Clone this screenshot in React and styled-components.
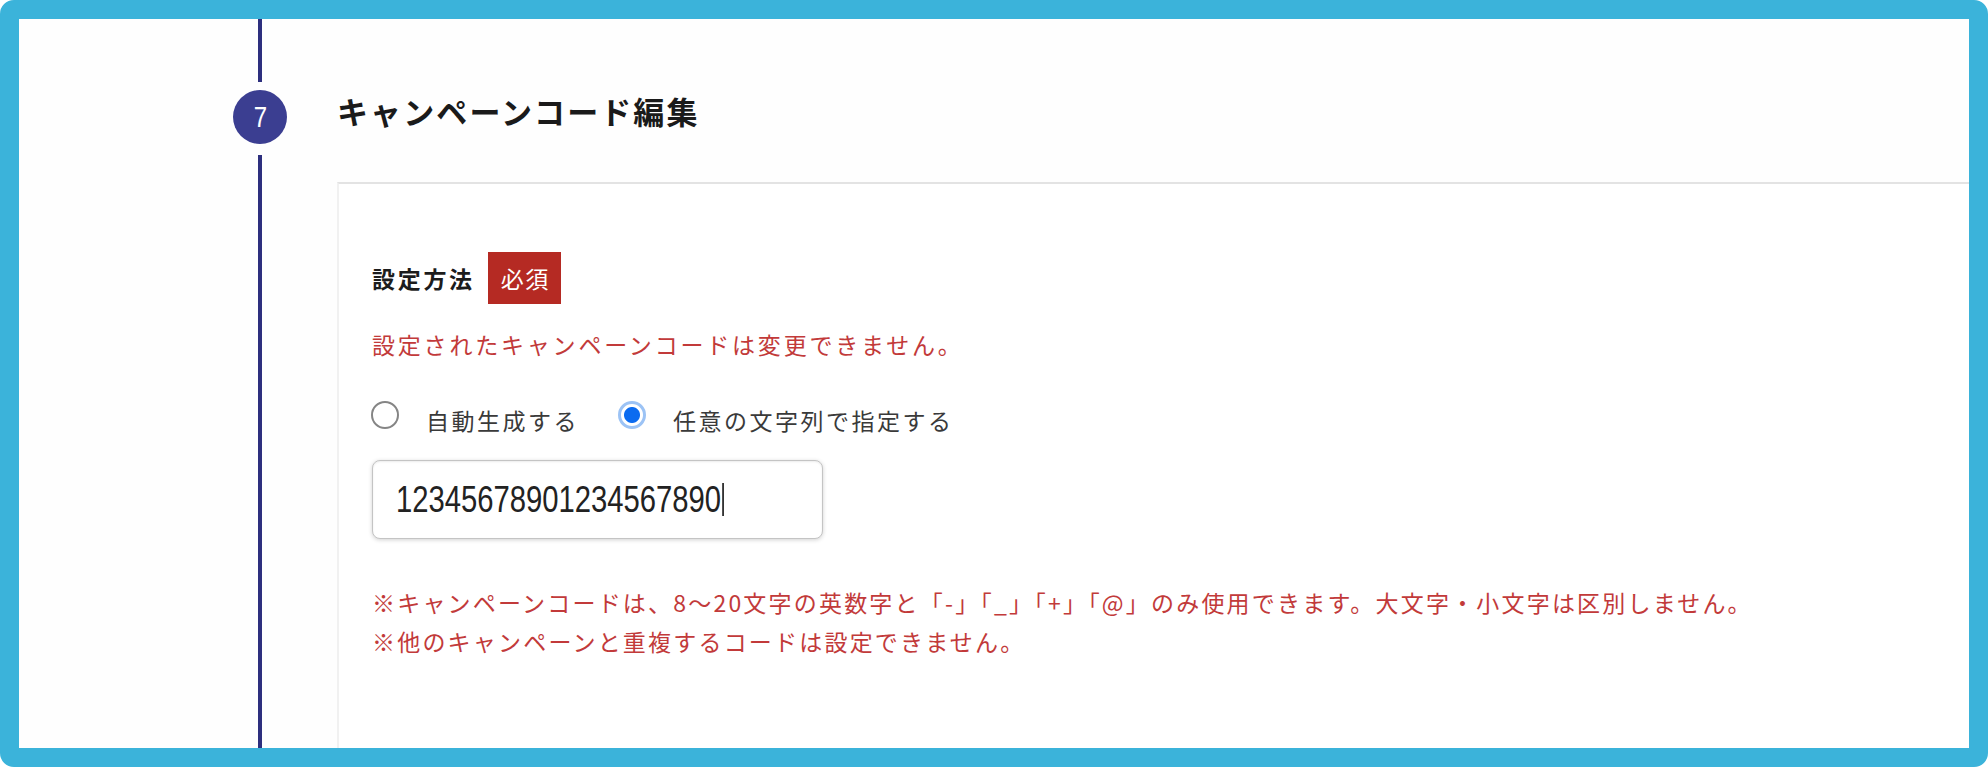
import React, { useState } from "react";
import styled, { createGlobalStyle } from "styled-components";

const GlobalStyle = createGlobalStyle`
  html, body {
    margin: 0;
    padding: 0;
    background: #ffffff;
  }
  body {
    font-family: "Noto Sans CJK JP", "Noto Sans", sans-serif;
  }
`;

const CampaignCodeStep = () => {
  const [mode, setMode] = useState("custom");
  const code = "12345678901234567890";

  return (
    <Frame>
      <GlobalStyle />
      <Rail>
        <RailLine $height="63px" />
        <StepBadge>
          <span>7</span>
        </StepBadge>
        <RailLine $grow />
      </Rail>

      <Content>
        <Title>キャンペーンコード編集</Title>
        <Card>
          <LabelRow>
            <FieldLabel>設定方法</FieldLabel>
            <Required>必須</Required>
          </LabelRow>

          <Warning>設定されたキャンペーンコードは変更できません。</Warning>

          <RadioRow>
            <RadioOption>
              <Radio
                type="radio"
                name="mode"
                checked={mode === "auto"}
                onChange={() => setMode("auto")}
              />
              <RadioText>自動生成する</RadioText>
            </RadioOption>
            <RadioOption>
              <Radio
                type="radio"
                name="mode"
                checked={mode === "custom"}
                onChange={() => setMode("custom")}
              />
              <RadioText>任意の文字列で指定する</RadioText>
            </RadioOption>
          </RadioRow>

          <CodeField>
            <CodeText>
              {code}
              <Caret />
            </CodeText>
          </CodeField>

          <Notes>
            <p>
              ※キャンペーンコードは、8〜20文字の英数字と「-」「_」「+」「@」のみ使用できます。大文字・小文字は区別しません。
            </p>
            <p>※他のキャンペーンと重複するコードは設定できません。</p>
          </Notes>
        </Card>
      </Content>
    </Frame>
  );
};

export default CampaignCodeStep;

//FRAME
const Frame = styled.div`
  box-sizing: border-box;
  height: 100vh;
  border: 19px solid #3bb3da;
  border-radius: 14px;
  background: #fefefe;
  overflow: hidden;
  padding-left: 214px;
  display: grid;
  grid-template-columns: 54px 1fr;
  column-gap: 50px;
`;

//TIMELINE
const Rail = styled.div`
  display: flex;
  flex-direction: column;
  align-items: center;
`;

const RailLine = styled.div`
  width: 4px;
  background: #2d2f7e;
  height: ${(p) => p.$height || "auto"};
  flex: ${(p) => (p.$grow ? 1 : "none")};
  margin-top: ${(p) => (p.$grow ? "11px" : "0")};
`;

const StepBadge = styled.div`
  margin-top: 8px;
  width: 54px;
  height: 54px;
  border-radius: 50%;
  background: #3b3e91;
  color: #ffffff;
  display: flex;
  align-items: center;
  justify-content: center;
  font-family: "Liberation Sans", Arial, sans-serif;
  font-size: 30px;

  span {
    display: inline-block;
    transform: scaleX(0.8);
  }
`;

//CONTENT
const Content = styled.div`
  display: flex;
  flex-direction: column;
  min-width: 0;
`;

const Title = styled.h2`
  margin: 68px 0 0;
  font-size: 31px;
  line-height: 48px;
  letter-spacing: 2.1px;
  font-weight: 700;
  color: #1a1a1a;
`;

const Card = styled.section`
  margin-top: 47px;
  flex: 1;
  border-top: 2px solid #e3e3e3;
  border-left: 2px solid #f1f1f1;
  background: #ffffff;
  padding: 68px 0 0 33px;
`;

const LabelRow = styled.div`
  display: flex;
  align-items: center;
  gap: 13px;
  height: 52px;
`;

const FieldLabel = styled.span`
  font-size: 23px;
  font-weight: 700;
  letter-spacing: 2.7px;
  color: #1c1c1c;
`;

const Required = styled.span`
  width: 73px;
  height: 52px;
  box-sizing: border-box;
  padding-left: 2px;
  background: #b52a23;
  color: #ffffff;
  font-size: 23px;
  letter-spacing: 1.5px;
  display: flex;
  align-items: center;
  justify-content: center;
`;

const Warning = styled.p`
  margin: 22px 0 0;
  font-size: 23px;
  line-height: 36px;
  letter-spacing: 2.8px;
  color: #c23a3a;
`;

const RadioRow = styled.div`
  margin-top: 35px;
  height: 36px;
  display: flex;
  align-items: center;
  gap: 40px;
`;

const RadioOption = styled.label`
  display: flex;
  align-items: center;
  gap: 27px;
  cursor: pointer;
`;

const Radio = styled.input`
  appearance: none;
  -webkit-appearance: none;
  box-sizing: border-box;
  margin: 0 0 0 -1px;
  width: 28px;
  height: 28px;
  border-radius: 50%;
  border: 2px solid #858585;
  background: #ffffff;

  &:checked {
    border: 3px solid #9cc3f5;
    background: radial-gradient(circle, #0b6bf0 0 7.5px, #ffffff 8.5px);
  }
`;

const RadioText = styled.span`
  padding-top: 10px;
  font-size: 23px;
  letter-spacing: 2.5px;
  color: #3a3a3a;
`;

const CodeField = styled.div`
  margin-top: 27px;
  box-sizing: border-box;
  width: 451px;
  height: 79px;
  padding-left: 23px;
  border: 1.5px solid #c4c4c4;
  border-radius: 8px;
  background: #ffffff;
  box-shadow: 0 1px 4px rgba(0, 0, 0, 0.18), inset 0 1px 2px rgba(0, 0, 0, 0.08);
  display: flex;
  align-items: center;
`;

const CodeText = styled.span`
  display: inline-flex;
  align-items: center;
  font-family: "Liberation Sans", Arial, sans-serif;
  font-size: 37px;
  color: #222222;
  transform: scaleX(0.79);
  transform-origin: left center;
`;

const Caret = styled.span`
  display: inline-block;
  width: 2.5px;
  height: 33px;
  margin-left: 1px;
  background: #111111;
`;

const Notes = styled.div`
  margin-top: 44px;
  font-size: 23px;
  line-height: 39px;
  letter-spacing: 2.2px;
  color: #c23a3a;

  p {
    margin: 0;
  }
`;
